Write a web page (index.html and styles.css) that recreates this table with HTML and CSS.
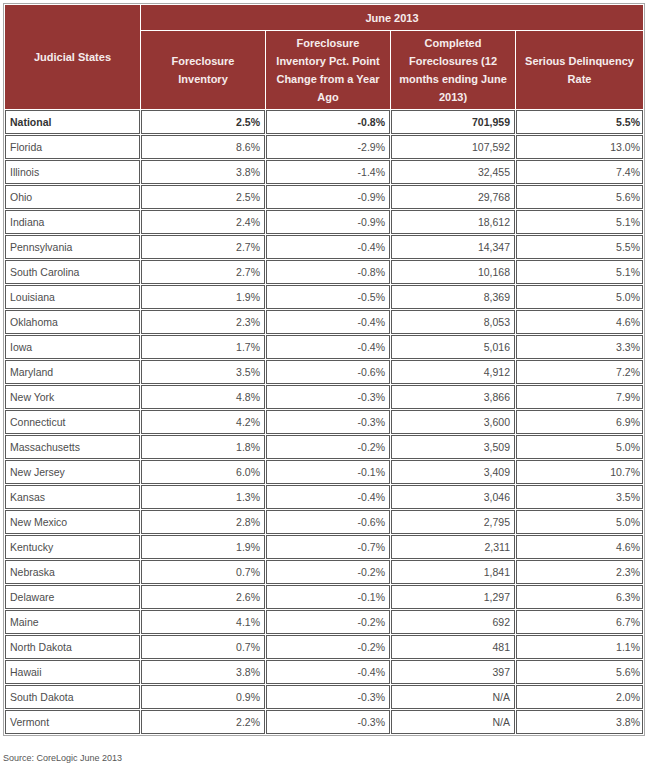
FILE: index.html
```html
<!DOCTYPE html>
<html>
<head>
<meta charset="utf-8">
<link rel="stylesheet" href="styles.css">
</head>
<body>
<table class="data">
  <thead>
    <tr class="h1">
      <th class="state-h" rowspan="2">Judicial States</th>
      <th colspan="4">June 2013</th>
    </tr>
    <tr class="h2">
      <th>Foreclosure<br>Inventory</th>
      <th>Foreclosure<br>Inventory Pct. Point<br>Change from a Year<br>Ago</th>
      <th>Completed<br>Foreclosures (12<br>months ending June<br>2013)</th>
      <th>Serious Delinquency<br>Rate</th>
    </tr>
  </thead>
  <tbody>
    <tr class="nat"><td class="c1">National</td><td class="c2">2.5%</td><td class="c3">-0.8%</td><td class="c4">701,959</td><td class="c5">5.5%</td></tr>
    <tr><td class="c1">Florida</td><td class="c2">8.6%</td><td class="c3">-2.9%</td><td class="c4">107,592</td><td class="c5">13.0%</td></tr>
    <tr><td class="c1">Illinois</td><td class="c2">3.8%</td><td class="c3">-1.4%</td><td class="c4">32,455</td><td class="c5">7.4%</td></tr>
    <tr><td class="c1">Ohio</td><td class="c2">2.5%</td><td class="c3">-0.9%</td><td class="c4">29,768</td><td class="c5">5.6%</td></tr>
    <tr><td class="c1">Indiana</td><td class="c2">2.4%</td><td class="c3">-0.9%</td><td class="c4">18,612</td><td class="c5">5.1%</td></tr>
    <tr><td class="c1">Pennsylvania</td><td class="c2">2.7%</td><td class="c3">-0.4%</td><td class="c4">14,347</td><td class="c5">5.5%</td></tr>
    <tr><td class="c1">South Carolina</td><td class="c2">2.7%</td><td class="c3">-0.8%</td><td class="c4">10,168</td><td class="c5">5.1%</td></tr>
    <tr><td class="c1">Louisiana</td><td class="c2">1.9%</td><td class="c3">-0.5%</td><td class="c4">8,369</td><td class="c5">5.0%</td></tr>
    <tr><td class="c1">Oklahoma</td><td class="c2">2.3%</td><td class="c3">-0.4%</td><td class="c4">8,053</td><td class="c5">4.6%</td></tr>
    <tr><td class="c1">Iowa</td><td class="c2">1.7%</td><td class="c3">-0.4%</td><td class="c4">5,016</td><td class="c5">3.3%</td></tr>
    <tr><td class="c1">Maryland</td><td class="c2">3.5%</td><td class="c3">-0.6%</td><td class="c4">4,912</td><td class="c5">7.2%</td></tr>
    <tr><td class="c1">New York</td><td class="c2">4.8%</td><td class="c3">-0.3%</td><td class="c4">3,866</td><td class="c5">7.9%</td></tr>
    <tr><td class="c1">Connecticut</td><td class="c2">4.2%</td><td class="c3">-0.3%</td><td class="c4">3,600</td><td class="c5">6.9%</td></tr>
    <tr><td class="c1">Massachusetts</td><td class="c2">1.8%</td><td class="c3">-0.2%</td><td class="c4">3,509</td><td class="c5">5.0%</td></tr>
    <tr><td class="c1">New Jersey</td><td class="c2">6.0%</td><td class="c3">-0.1%</td><td class="c4">3,409</td><td class="c5">10.7%</td></tr>
    <tr><td class="c1">Kansas</td><td class="c2">1.3%</td><td class="c3">-0.4%</td><td class="c4">3,046</td><td class="c5">3.5%</td></tr>
    <tr><td class="c1">New Mexico</td><td class="c2">2.8%</td><td class="c3">-0.6%</td><td class="c4">2,795</td><td class="c5">5.0%</td></tr>
    <tr><td class="c1">Kentucky</td><td class="c2">1.9%</td><td class="c3">-0.7%</td><td class="c4">2,311</td><td class="c5">4.6%</td></tr>
    <tr><td class="c1">Nebraska</td><td class="c2">0.7%</td><td class="c3">-0.2%</td><td class="c4">1,841</td><td class="c5">2.3%</td></tr>
    <tr><td class="c1">Delaware</td><td class="c2">2.6%</td><td class="c3">-0.1%</td><td class="c4">1,297</td><td class="c5">6.3%</td></tr>
    <tr><td class="c1">Maine</td><td class="c2">4.1%</td><td class="c3">-0.2%</td><td class="c4">692</td><td class="c5">6.7%</td></tr>
    <tr><td class="c1">North Dakota</td><td class="c2">0.7%</td><td class="c3">-0.2%</td><td class="c4">481</td><td class="c5">1.1%</td></tr>
    <tr><td class="c1">Hawaii</td><td class="c2">3.8%</td><td class="c3">-0.4%</td><td class="c4">397</td><td class="c5">5.6%</td></tr>
    <tr><td class="c1">South Dakota</td><td class="c2">0.9%</td><td class="c3">-0.3%</td><td class="c4">N/A</td><td class="c5">2.0%</td></tr>
    <tr><td class="c1">Vermont</td><td class="c2">2.2%</td><td class="c3">-0.3%</td><td class="c4">N/A</td><td class="c5">3.8%</td></tr>
  </tbody>
</table>
<p class="source">Source: CoreLogic June 2013</p>
</body>
</html>
```

FILE: styles.css
```css
html, body {
  margin: 0;
  padding: 0;
  background: #ffffff;
}
body {
  padding: 3px 0 0 3px;
  font-family: "Liberation Sans", Arial, sans-serif;
}
.data {
  width: 642px;
  border-collapse: separate;
  border-spacing: 1px;
  border: 1px solid #a8a8a8;
  table-layout: auto;
}
.data th,
.data td {
  box-sizing: border-box;
}
.data th {
  background: #943634;
  color: #f6ecec;
  font-weight: bold;
  font-size: 11px;
  line-height: 18px;
  text-align: center;
  vertical-align: middle;
  padding: 0 3px;
  border: 1px solid #943634;
}
.h1 th {
  height: 25px;
}
.h2 th {
  height: 78px;
}
.data td {
  height: 24px;
  padding: 0 4px;
  border: 1px solid #5a5a5a;
  font-size: 10.5px;
  color: #4d4d4d;
  text-align: right;
  vertical-align: middle;
  white-space: nowrap;
}
.data td.c1 {
  width: 135px;
  text-align: left;
}
.data td.c2,
.data td.c3,
.data td.c4 {
  width: 124px;
}
.data td.c5 {
  width: 127px;
  padding-right: 2px;
}
.nat td {
  font-weight: bold;
  color: #333333;
}
.source {
  margin: 17px 0 0 0;
  font-size: 9px;
  color: #555555;
}
```
